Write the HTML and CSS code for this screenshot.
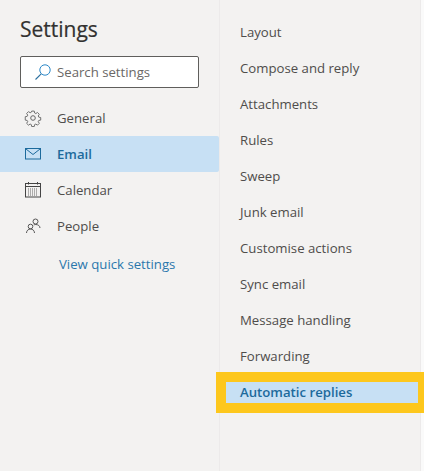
FILE: index.html
```html
<!DOCTYPE html>
<html lang="en">
<head>
    <meta charset="UTF-8">
    <title>Settings</title>
    <link rel="stylesheet" href="styles.css">
</head>
<body>
    <div class="settings">
        <div class="side">
            <h1 class="title">Settings</h1>
            <div class="search">
                <svg class="search-icon" width="18" height="18" viewBox="0 0 18 18" fill="none">
                    <circle cx="11" cy="7" r="5.2" stroke="#2b88c8" stroke-width="1"/>
                    <path d="M7.2 10.8L1.500 16.500" stroke="#2b6f9e" stroke-width="1.100"/>
                </svg>
                <span>Search settings</span>
            </div>
            <div class="cat">
                <svg class="cat-icon" width="18" height="18" viewBox="0 0 18 18" fill="none" stroke="#666" stroke-width="1">
                    <circle cx="9" cy="9" r="2.300"/>
                    <path d="M7.600 1.500h2.800l.4 2.100 1.300.6 1.800-1.200 2 2-1.200 1.800.6 1.300 2.100.4v2.800l-2.100.4-.6 1.300 1.200 1.800-2 2-1.800-1.200-1.300.6-.4 2.100H7.600l-.4-2.100-1.300-.6-1.800 1.200-2-2 1.200-1.800-.6-1.300-2.100-.4V7.600l2.100-.4.6-1.300-1.200-1.800 2-2 1.800 1.200 1.300-.6z" transform="translate(.7 .7) scale(.92)"/>
                </svg>
                General
            </div>
            <div class="cat cat-active">
                <svg class="cat-icon" width="18" height="18" viewBox="0 0 18 18" fill="none" stroke="#1c6a9c" stroke-width="1">
                    <rect x="1.500" y="3.500" width="15" height="10.500"/>
                    <path d="M2 4l7 5.500L16 4"/>
                </svg>
                Email
            </div>
            <div class="cat">
                <svg class="cat-icon" width="18" height="18" viewBox="0 0 18 18" fill="none" stroke="#444" stroke-width="1">
                    <rect x="1.500" y="2.500" width="15" height="13.500"/>
                    <path d="M1.500 5.500h15M4.500 1v2.500M13.500 1v2.500"/>
                    <path d="M4 8h10M4 10h10M4 12h10M4 14h10" stroke-dasharray="1 1" stroke="#666"/>
                </svg>
                Calendar
            </div>
            <div class="cat">
                <svg class="cat-icon" width="18" height="18" viewBox="0 0 18 18" fill="none" stroke="#555" stroke-width="1">
                    <circle cx="11.500" cy="4.500" r="2.500"/>
                    <path d="M16 11c0-2-1.800-3.500-4.200-3.500-.8 0-1.500.2-2.100.5"/>
                    <circle cx="6.500" cy="9.500" r="2.300"/>
                    <path d="M2.500 16c0-2.300 1.800-4 4-4s4 1.700 4 4"/>
                </svg>
                People
            </div>
            <div class="quick">View quick settings</div>
        </div>
        <div class="sub">
            <div class="item">Layout</div>
            <div class="item">Compose and reply</div>
            <div class="item">Attachments</div>
            <div class="item">Rules</div>
            <div class="item">Sweep</div>
            <div class="item">Junk email</div>
            <div class="item">Customise actions</div>
            <div class="item">Sync email</div>
            <div class="item">Message handling</div>
            <div class="item">Forwarding</div>
            <div class="item item-active">Automatic replies</div>
        </div>
        <div class="rest"></div>
    </div>
</body>
</html>
```

FILE: styles.css
```css
html, body {
    margin: 0;
    padding: 0;
}

body {
    width: 424px;
    height: 471px;
    overflow: hidden;
    background: #f3f2f1;
    font-family: "Open Sans", "Noto Sans", sans-serif;
    font-size: 13.2px;
    color: #4f4d4b;
}

.settings {
    display: flex;
    height: 471px;
}

.side {
    width: 219px;
    flex-shrink: 0;
    border-right: 1px solid #eceaea;
}

.title {
    margin: 0;
    padding: 15px 0 0 20px;
    height: 41px;
    font-size: 21px;
    line-height: 28px;
    font-weight: 400;
    color: #323130;
    -webkit-text-stroke: 0.2px #323130;
}

.search {
    display: flex;
    align-items: center;
    margin: 0 20px;
    height: 30px;
    background: #fff;
    border: 1px solid #5f5e5c;
    border-radius: 2px;
    color: #6a6866;
}

.search-icon {
    margin: 0 5px 0 13px;
}

.cat {
    display: flex;
    align-items: center;
    height: 36px;
    padding-left: 24px;
}

.search + .cat {
    margin-top: 12px;
}

.cat-icon {
    margin-right: 15px;
}

.cat-active {
    background: #c7e0f4;
    font-weight: 600;
    color: #1c6a9c;
    border-radius: 0 2px 2px 0;
}

.quick {
    padding: 11px 0 0 59px;
    line-height: 18px;
    color: #2a77ac;
}

.sub {
    width: 200px;
    flex-shrink: 0;
    padding-top: 14px;
}

.item {
    height: 36px;
    line-height: 36px;
    padding-left: 20px;
}

.item-active {
    position: relative;
    box-sizing: border-box;
    height: 41px;
    width: 208px;
    margin: -2px 0 0 -4px;
    padding-left: 14px;
    line-height: 21px;
    background: #c7e0f4;
    border: 10px solid #fdc71c;
    border-right-width: 6px;
    color: #1c6a9c;
    font-weight: 600;
}

.rest {
    flex: 1;
    background: #fafafa;
    border-left: 1px solid #eceaea;
}
```
